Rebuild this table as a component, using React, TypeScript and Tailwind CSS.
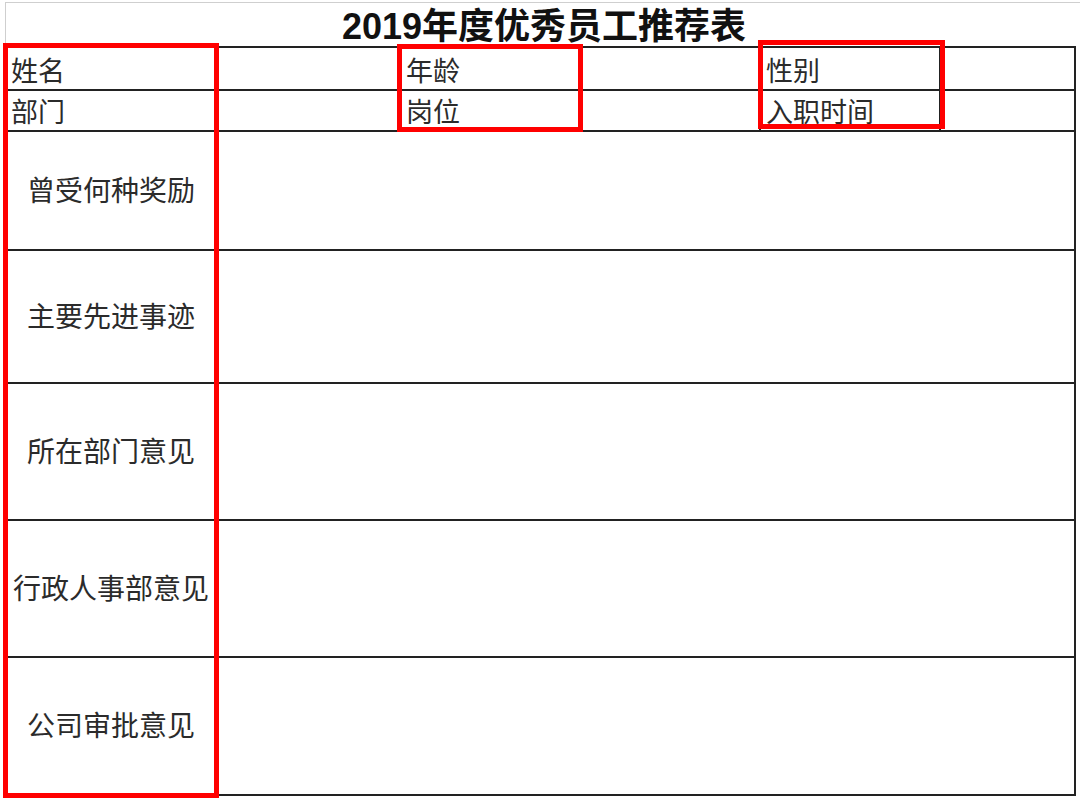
import React from 'react';

const topCells = [
  ['姓名', '', '年龄', '', '性别', ''],
  ['部门', '', '岗位', '', '入职时间', '']
];

const bigRows = [
  { label: '曾受何种奖励', h: 'h-[119px]' },
  { label: '主要先进事迹', h: 'h-[133px]' },
  { label: '所在部门意见', h: 'h-[137px]' },
  { label: '行政人事部意见', h: 'h-[137px]' },
  { label: '公司审批意见', h: 'h-[138px]' }
];

const colWidths = ['w-[212px]', 'w-[183px]', 'w-[180px]', 'w-[180px]', 'w-[180px]', 'w-[135px]'];

export default function App() {
  return (
    <div
      className="relative w-[1080px] h-[800px] bg-white overflow-hidden text-[#2b2b2b]"
      style={{ fontFamily: '"Liberation Sans", "Noto Sans CJK SC", sans-serif' }}>

      {/* title row */}
      <div className="ml-[5px] mt-[2px] h-[44px] border-t border-l border-[#cfcfcf] flex items-center justify-center">
        <h1 className="text-[36px] font-semibold leading-none text-[#111] pl-[2px] pt-[4px]">
          2019年度优秀员工推荐表
        </h1>
      </div>

      {/* form table */}
      <div className="ml-[4px] w-[1072px] border-t-2 border-l-2 border-[#222]">
        {topCells.map((row, r) =>
        <div key={r} className={`flex ${r === 0 ? 'h-[43px]' : 'h-[41px]'}`}>
            {row.map((cell, c) =>
          <div
            key={c}
            className={`${colWidths[c]} shrink-0 border-r-2 border-b-2 border-[#222] flex items-end pl-[5px] pb-[3px] text-[27px] leading-none`}>
                {cell}
              </div>
          )}
          </div>
        )}

        {bigRows.map((row) =>
        <div key={row.label} className={`flex ${row.h}`}>
            <div className="w-[212px] shrink-0 border-r-2 border-b-2 border-[#222] flex items-center justify-center text-[28px] leading-none pt-[2px]">
              {row.label}
            </div>
            <div className="flex-1 border-r-2 border-b-2 border-[#222]" />
          </div>
        )}
      </div>

      {/* red highlight boxes */}
      <div className="absolute left-[3px] top-[43px] w-[216px] h-[755px] border-[5px] border-[#ff0000]" />
      <div className="absolute left-[397px] top-[44px] w-[186px] h-[88px] border-[5px] border-[#ff0000]" />
      <div className="absolute left-[758px] top-[40px] w-[187px] h-[89px] border-[5px] border-[#ff0000]" />
    </div>);

}
